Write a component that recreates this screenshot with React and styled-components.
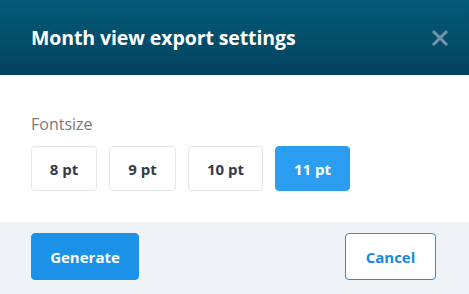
import styled, { createGlobalStyle } from "styled-components";

const GlobalStyle = createGlobalStyle`
  body {
    margin: 0;
    font-family: "Open Sans", "Liberation Sans", sans-serif;
    background: #fff;
  }
`

const Dialog = styled.div`
  width: 469px;
  height: 294px;
  display: flex;
  flex-direction: column;
`
const Header = styled.div`
  height: 75px;
  box-sizing: border-box;
  padding: 0 20px 0 31px;
  display: flex;
  align-items: center;
  justify-content: space-between;
  background: linear-gradient(#045a78, #02435e);
`
const Title = styled.h1`
  margin: 0;
  font-size: 19.5px;
  font-weight: 700;
  color: #fff;
  letter-spacing: -0.1px;
`
const CloseButton = styled.button`
  border: none;
  background: none;
  padding: 0;
  width: 18px;
  height: 18px;
  cursor: pointer;
  display: flex;
`
const Body = styled.div`
  flex: 1;
  padding: 39px 31px 0;
`
const Label = styled.div`
  font-size: 16px;
  color: #7a7a7a;
  line-height: 20px;
`
const Options = styled.div`
  display: flex;
  gap: 12px;
  margin-top: 12px;
`
const Option = styled.button`
  height: 45px;
  min-width: ${(p) => p.$w}px;
  box-sizing: border-box;
  border-radius: 4px;
  border: 1px solid ${(p) => (p.$active ? "#2c9ef2" : "#e2e4e6")};
  background: ${(p) => (p.$active ? "#2c9ef2" : "#fff")};
  color: ${(p) => (p.$active ? "#fff" : "#343c4a")};
  font-family: inherit;
  font-size: 15px;
  font-weight: 700;
  cursor: pointer;
`
const Footer = styled.div`
  height: 72px;
  background: #eff2f6;
  box-sizing: border-box;
  padding: 11px 33px 0 31px;
  display: flex;
  justify-content: space-between;
  align-items: flex-start;
`
const Button = styled.button`
  height: 47px;
  box-sizing: border-box;
  border-radius: 4px;
  font-family: inherit;
  font-size: 15px;
  font-weight: 700;
  padding: 0;
  width: ${(p) => p.$w}px;
  border: 1px solid #1b91e8;
  background: ${(p) => (p.$primary ? "#1b91e8" : "#fff")};
  color: ${(p) => (p.$primary ? "#fff" : "#1b88dc")};
  cursor: pointer;
`

const sizes = [
  { label: "8 pt", w: 66 },
  { label: "9 pt", w: 67 },
  { label: "10 pt", w: 75 },
  { label: "11 pt", w: 75 },
]

export default function App() {
  return (
    <>
      <GlobalStyle />
      <Dialog>
        <Header>
          <Title>Month view export settings</Title>
          <CloseButton aria-label="Close">
            <svg width="18" height="18" viewBox="0 0 18 18">
              <path d="M2 2L16 16M16 2L2 16" stroke="#6f95a6" strokeWidth="3" />
            </svg>
          </CloseButton>
        </Header>
        <Body>
          <Label>Fontsize</Label>
          <Options>
            {sizes.map((s) => (
              <Option key={s.label} $w={s.w} $active={s.label === "11 pt"}>
                {s.label}
              </Option>
            ))}
          </Options>
        </Body>
        <Footer>
          <Button $primary $w={108}>Generate</Button>
          <Button $w={91}>Cancel</Button>
        </Footer>
      </Dialog>
    </>
  )
}
